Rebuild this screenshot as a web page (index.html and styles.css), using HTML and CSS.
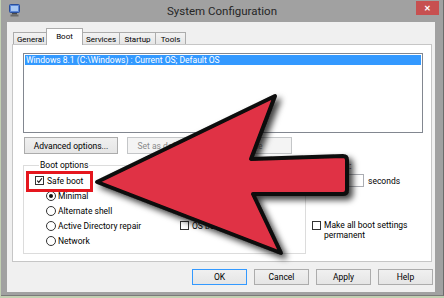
FILE: index.html
```html
<!DOCTYPE html>
<html>
<head>
<meta charset="utf-8">
<title>System Configuration</title>
<link rel="stylesheet" href="styles.css">
</head>
<body>
<div class="window">
  <div class="titlebar">
    <div class="tb-left">
      <svg class="appicon" viewBox="0 0 11 13">
        <rect x="0.5" y="0.5" width="10" height="8" rx="1" fill="#5b86d6" stroke="#2a4f9a"/>
        <rect x="2" y="2" width="7" height="5" fill="#a9c8f2"/>
        <rect x="3" y="9" width="5" height="1.5" fill="#4a4a4a"/>
        <rect x="1.5" y="10.5" width="8" height="2" fill="#6a6a6a"/>
      </svg>
    </div>
    <div class="title">System Configuration</div>
    <div class="tb-right"><div class="close">&#x2715;</div></div>
  </div>
  <div class="dialog">
    <div class="tabbar">
      <div class="tab t-general">General</div>
      <div class="tab tab-sel t-boot">Boot</div>
      <div class="tab t-services">Services</div>
      <div class="tab t-startup">Startup</div>
      <div class="tab t-tools">Tools</div>
    </div>
    <div class="panel">
      <div class="listbox">
        <div class="list-item sel">Windows 8.1 (C:\Windows) : Current OS; Default OS</div>
      </div>
      <div class="btnrow">
        <div class="btn b-adv">Advanced options...</div>
        <div class="btn disabled b-set">Set as default</div>
        <div class="btn disabled b-del">Delete</div>
      </div>
      <div class="lower">
        <fieldset class="group">
          <legend>Boot options</legend>
          <div class="group-cols">
            <div class="col-left">
              <div class="row"><span class="cb"><svg viewBox="0 0 9 9"><path d="M1.6 4.6 L3.6 6.8 L7.6 1.6" fill="none" stroke="#111" stroke-width="1.5"/></svg></span>Safe boot</div>
              <div class="row indent"><span class="rb"><span class="dot"></span></span>Minimal</div>
              <div class="row indent"><span class="rb"></span>Alternate shell</div>
              <div class="row indent"><span class="rb"></span>Active Directory repair</div>
              <div class="row indent"><span class="rb"></span>Network</div>
            </div>
            <div class="col-right">
              <div class="row"><span class="cb"></span>No GUI boot</div>
              <div class="row"><span class="cb"></span>Boot log</div>
              <div class="row"><span class="cb"></span>Base video</div>
              <div class="row"><span class="cb"></span>OS boot information</div>
            </div>
          </div>
        </fieldset>
        <div class="side">
          <div class="timeout-label">Timeout:</div>
          <div class="timeout-row"><div class="textbox">30</div><span class="sec">seconds</span></div>
          <div class="perm"><span class="cb"></span><span class="perm-text">Make all boot settings<br>permanent</span></div>
        </div>
      </div>
    </div>
    <div class="footer">
      <div class="btn fbtn b-ok">OK</div>
      <div class="btn fbtn">Cancel</div>
      <div class="btn fbtn">Apply</div>
      <div class="btn fbtn">Help</div>
    </div>
  </div>
</div>
<div class="highlight"></div>
<svg class="arrow" viewBox="0 0 444 298" width="444" height="298">
  <defs>
    <filter id="sh" x="-20%" y="-20%" width="140%" height="140%">
      <feDropShadow dx="4" dy="4" stdDeviation="3" flood-color="#000" flood-opacity="0.75"/>
    </filter>
  </defs>
  <path d="M97,182 L275,96 L251,159 L343,156 Q347,156 347,160 L347,190 Q347,194 343,194 L253,194 L281,253 Z" fill="#e03344" stroke="#0a0a0a" stroke-width="4" stroke-linejoin="round" filter="url(#sh)"/>
</svg>
</body>
</html>
```

FILE: styles.css
```css
* { box-sizing: border-box; }
html, body { margin: 0; padding: 0; }
body {
  width: 444px;
  height: 298px;
  overflow: hidden;
  background: #c2d0b2;
  font-family: Roboto, "Liberation Sans", sans-serif;
  font-size: 8.5px;
  color: #000;
  position: relative;
}
.window {
  margin-left: 1px;
  width: 443px;
  height: 296px;
  background: #a1a1a1;
  border-right: 1px solid #6b6b6b;
  border-bottom: 1px solid #7a7a7a;
  display: flex;
  flex-direction: column;
}
.titlebar {
  height: 22px;
  display: grid;
  grid-template-columns: 1fr auto 1fr;
  align-items: start;
}
.tb-left { padding: 4px 0 0 8px; }
.appicon { display: block; width: 11px; height: 13px; }
.title { font-size: 11.5px; color: #262626; line-height: 23px; }
.tb-right { display: flex; justify-content: flex-end; padding: 1px 4px 0 0; }
.close {
  width: 23px; height: 14px;
  background: #c75050; color: #fff;
  font-size: 8px; font-weight: bold;
  display: flex; align-items: center; justify-content: center;
}
.dialog {
  flex: 1;
  margin: 0 8px 3px 6px;
  background: #f0f0f0;
  padding: 6px 0 0 5px;
  display: flex;
  flex-direction: column;
}
.tabbar { display: flex; height: 16px; padding-left: 1px; align-items: flex-end; }
.tab {
  height: 12px;
  border: 1px solid #acacac;
  border-bottom: none;
  margin-right: -1px;
  background: linear-gradient(#f3f3f3, #e6e6e6);
  display: flex; align-items: center; justify-content: center;
  padding-top: 1px;
  font-size: 8px;
}
.tab-sel {
  height: 17px;
  margin: 0 -1px -1px -2px;
  background: #fff;
  position: relative;
  z-index: 1;
  align-items: flex-start;
  padding-top: 3px;
}
.t-general { width: 36px; padding-right: 1px; }
.t-boot { width: 37px; }
.t-services { width: 38px; }
.t-startup { width: 37px; }
.t-tools { width: 31px; }
.panel {
  width: 420px;
  height: 218px;
  background: #fff;
  border: 1px solid #c6c6c6;
  display: flex;
  flex-direction: column;
}
.listbox {
  margin: 8px 0 0 10px;
  width: 400px;
  height: 80px;
  border: 1px solid #828790;
  background: #fff;
  padding: 1px;
}
.list-item { height: 10px; line-height: 10px; padding-left: 1px; }
.list-item.sel { background: #3399ff; color: #fff; }
.btnrow { display: flex; gap: 9px; margin-top: 4px; padding-left: 11px; height: 17px; }
.btn {
  height: 17px;
  border: 1px solid #acacac;
  background: linear-gradient(#f0f0f0, #e5e5e5);
  display: flex; align-items: center; justify-content: center;
}
.btn.disabled { background: #f4f4f4; border-color: #c4c6c8; color: #8a8a8a; }
.b-adv { width: 94px; }
.b-set { width: 73px; }
.b-del { width: 83px; }
.lower { display: flex; margin-top: 6px; }
.group {
  margin: 0 0 0 10px;
  width: 283px;
  height: 94px;
  border: 1px solid #dcdcdc;
  padding: 0 0 0 11px;
}
.group legend { padding: 0 1px; margin-left: 4px; line-height: 11px; }
.group-cols { display: flex; padding-top: 2px; }
.col-left { width: 145px; }
.row { height: 15px; display: flex; align-items: center; }
.row.indent { padding-left: 11px; }
.cb {
  width: 9px; height: 9px;
  border: 1px solid #333;
  background: #fff;
  margin-right: 3px;
  flex: none;
  display: flex;
}
.cb svg { width: 7px; height: 7px; }
.rb {
  width: 10px; height: 10px;
  border: 1px solid #333;
  border-radius: 50%;
  background: #fff;
  margin-right: 2px;
  flex: none;
  display: flex; align-items: center; justify-content: center;
}
.dot { width: 4px; height: 4px; border-radius: 50%; background: #111; }
.side { padding-left: 6px; display: flex; flex-direction: column; }
.timeout-label { height: 12px; line-height: 12px; padding-left: 6px; }
.timeout-row { display: flex; align-items: center; margin-top: 2px; padding-left: 6px; }
.textbox { width: 46px; height: 13px; border: 1px solid #abadb3; background: #fff; padding-left: 3px; line-height: 11px; }
.sec { margin-left: 4px; }
.perm { display: flex; margin-top: 34px; }
.perm-text { line-height: 10px; margin-top: -1px; }
.footer { display: flex; justify-content: flex-end; gap: 7px; margin-top: 7px; padding-right: 2px; }
.fbtn { width: 55px; height: 16px; }
.b-ok { border-color: #3399ff; }
.highlight {
  position: absolute;
  left: 26px; top: 171px;
  width: 67px; height: 21px;
  border: 3px solid #e5161e;
}
.arrow { position: absolute; left: 0; top: 0; pointer-events: none; }
```
